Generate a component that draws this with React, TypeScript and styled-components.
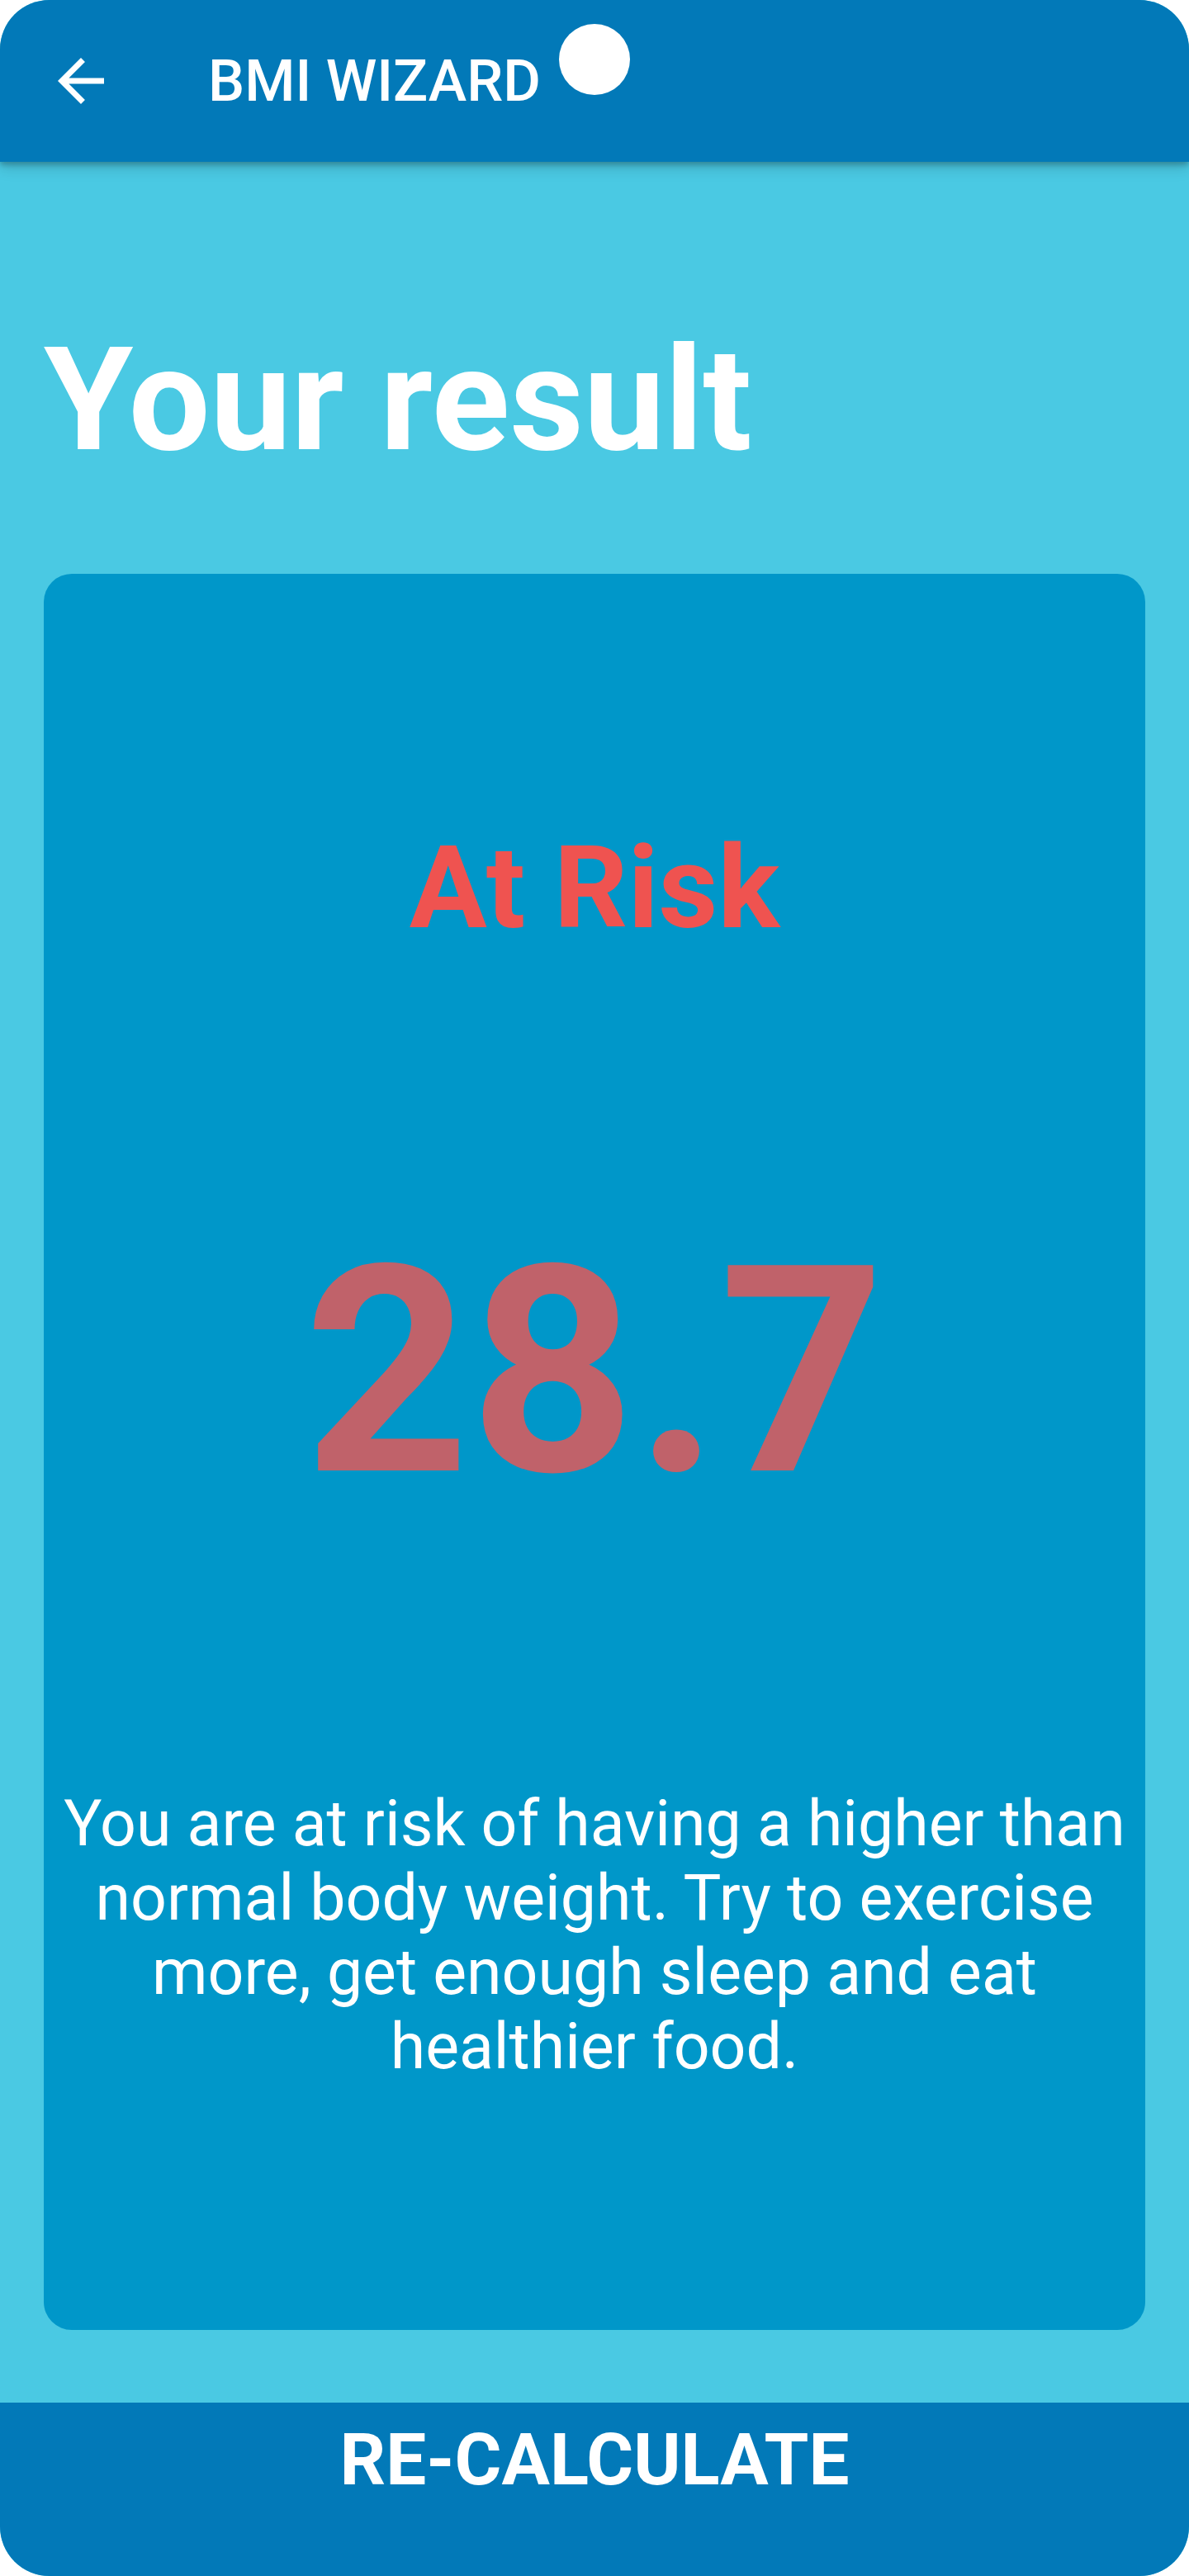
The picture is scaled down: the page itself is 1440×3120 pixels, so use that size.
import React from "react";
import styled, { createGlobalStyle } from "styled-components";

const GlobalStyle = createGlobalStyle`
  html, body {
    margin: 0;
    padding: 0;
    background: #ffffff;
  }
  body {
    font-family: Roboto, "Noto Sans", "Liberation Sans", sans-serif;
  }
  * { box-sizing: border-box; }
`;

const Screen = styled.div`
  position: relative;
  width: 1440px;
  height: 3120px;
  border-radius: 60px;
  overflow: hidden;
  background: #4ac9e3;
  display: flex;
  flex-direction: column;
`;

const AppBar = styled.header`
  position: relative;
  z-index: 2;
  flex: 0 0 196px;
  height: 196px;
  background: #0279b8;
  display: flex;
  align-items: center;
  box-shadow: 0 4px 6px rgba(0, 0, 0, 0.22), 0 8px 16px rgba(0, 0, 0, 0.14);
`;

const Leading = styled.button`
  width: 196px;
  height: 196px;
  border: none;
  background: transparent;
  padding: 0;
  display: flex;
  align-items: center;
  justify-content: center;
  color: #ffffff;
`;

const BarTitle = styled.h1`
  margin: 0 0 0 56px;
  font-family: Roboto, sans-serif;
  font-weight: 500;
  font-size: 70px;
  line-height: 82px;
  letter-spacing: 0;
  color: #ffffff;
`;

const Dot = styled.span`
  position: absolute;
  left: 677px;
  top: 29px;
  width: 86px;
  height: 86px;
  border-radius: 50%;
  background: #ffffff;
`;

const Body = styled.main`
  flex: 1 1 auto;
  display: flex;
  flex-direction: column;
  padding: 0 53px 88px 53px;
`;

const Heading = styled.h2`
  margin: 186px 0 0 0;
  font-family: Roboto, sans-serif;
  font-weight: 700;
  font-size: 175px;
  line-height: 205px;
  color: #ffffff;
`;

const ResultCard = styled.section`
  margin-top: 108px;
  flex: 1 1 auto;
  background: #0097c9;
  border-radius: 34px;
  display: flex;
  flex-direction: column;
  align-items: center;
  justify-content: space-evenly;
  padding: 0 12px;
`;

const Status = styled.p`
  margin: 0;
  font-family: Roboto, sans-serif;
  font-weight: 700;
  font-size: 140px;
  line-height: 164px;
  color: #ef5350;
`;

const Score = styled.p`
  margin: 0;
  font-family: Roboto, sans-serif;
  font-weight: 700;
  font-size: 350px;
  line-height: 410px;
  color: #c0626a;
`;

const Advice = styled.p`
  margin: 0;
  font-family: Roboto, sans-serif;
  font-weight: 400;
  font-size: 77px;
  line-height: 90px;
  text-align: center;
  color: #ffffff;
`;

const BottomButton = styled.button`
  flex: 0 0 210px;
  height: 210px;
  border: none;
  background: #0279b8;
  padding: 18px 0 0 0;
  display: flex;
  justify-content: center;
  align-items: flex-start;
  font-family: Roboto, sans-serif;
  font-weight: 700;
  font-size: 87px;
  line-height: 102px;
  color: #ffffff;
`;

const BackArrow = () => (
  <svg width="84" height="84" viewBox="0 0 24 24" fill="currentColor" aria-hidden="true">
    <path d="M20 11H7.83l5.59-5.59L12 4l-8 8 8 8 1.41-1.41L7.83 13H20v-2z" />
  </svg>
);

export default function App() {
  return (
    <>
      <GlobalStyle />
      <Screen>
        <AppBar>
          <Leading aria-label="Back">
            <BackArrow />
          </Leading>
          <BarTitle>BMI WIZARD</BarTitle>
          <Dot />
        </AppBar>
        <Body>
          <Heading>Your result</Heading>
          <ResultCard>
            <Status>At Risk</Status>
            <Score>28.7</Score>
            <Advice>
              You are at risk of having a higher than normal body weight. Try to exercise more, get enough sleep and eat healthier food.
            </Advice>
          </ResultCard>
        </Body>
        <BottomButton>RE-CALCULATE</BottomButton>
      </Screen>
    </>
  );
}
